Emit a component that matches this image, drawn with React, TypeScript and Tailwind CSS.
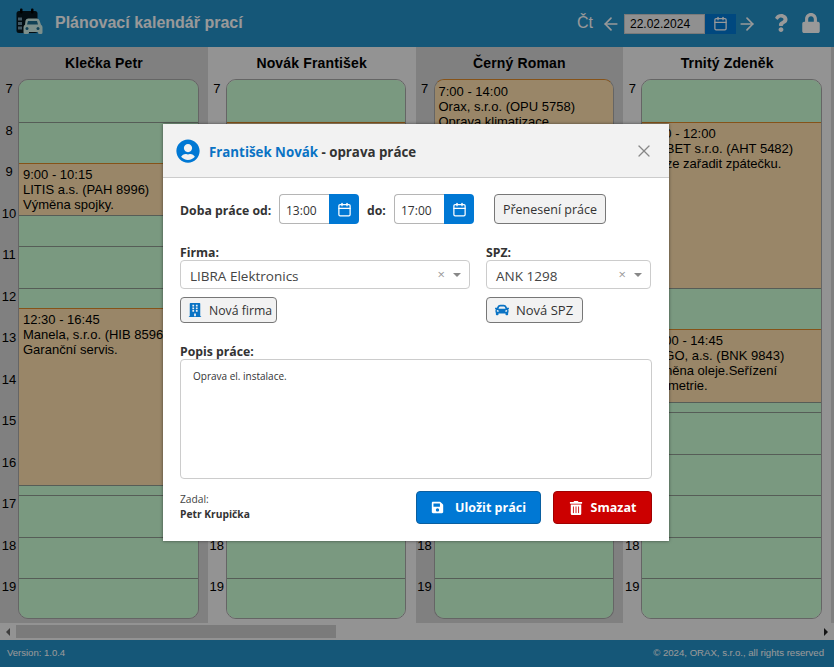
import { ArrowLeft, ArrowRight, Calendar, X } from 'lucide-react'
import { FaBuilding, FaCar, FaLock, FaQuestion, FaSave, FaTrashAlt, FaUserCircle } from 'react-icons/fa'

const HOUR = 41.5

type Job = { from: number; to: number; lines: string[] }
type Worker = { name: string; jobs: Job[] }

const workers: Worker[] = [
  {
    name: 'Klečka Petr',
    jobs: [
      { from: 9, to: 10.25, lines: ['9:00 - 10:15', 'LITIS a.s. (PAH 8996)', 'Výměna spojky.'] },
      { from: 12.5, to: 16.75, lines: ['12:30 - 16:45', 'Manela, s.r.o. (HIB 8596)', 'Garanční servis.'] },
    ],
  },
  {
    name: 'Novák František',
    jobs: [{ from: 8, to: 17, lines: ['13:00 - 17:00', 'LIBRA Elektronics', 'Oprava el. instalace.'] }],
  },
  {
    name: 'Černý Roman',
    jobs: [{ from: 7, to: 14, lines: ['7:00 - 14:00', 'Orax, s.r.o. (OPU 5758)', 'Oprava klimatizace'] }],
  },
  {
    name: 'Trnitý Zdeněk',
    jobs: [
      { from: 8, to: 12, lines: ['8:00 - 12:00', 'ROBET s.r.o. (AHT 5482)', 'Nelze zařadit zpátečku.'] },
      { from: 13, to: 14.75, lines: ['13:00 - 14:45', 'ARGO, a.s. (BNK 9843)', 'Výměna oleje.Seřízení', 'geometrie.'] },
    ],
  },
]

const hours = [7, 8, 9, 10, 11, 12, 13, 14, 15, 16, 17, 18, 19]

function Day ({ jobs }: { jobs: Job[] }): JSX.Element {
  const cells: JSX.Element[] = []
  let t = 7
  while (t < 20) {
    const job = jobs.find((j) => j.from === t)
    if (job != null) {
      cells.push(
        <div key={t} className="border-t border-[#e08a2a] bg-[#ffe0ad] px-[4px] pt-[3px] first:pt-[4px] text-[13px] leading-[15px] text-black first:border-t-0 overflow-hidden" style={{ height: (job.to - job.from) * HOUR }}>
          {job.lines.map((line) => <div key={line} className="whitespace-nowrap">{line}</div>)}
        </div>
      )
      t = job.to
    } else {
      const next = Math.min(Math.floor(t) + 1, ...jobs.filter((j) => j.from > t).map((j) => j.from))
      cells.push(
        <div key={t} className="border-t border-[#8f9c92] bg-[#ccffd5] first:border-t-0" style={{ height: (next - t) * HOUR }} />
      )
      t = next
    }
  }
  const startsBusy = jobs.some((j) => j.from === 7)
  return (
    <div className={startsBusy ? 'w-[180.5px] h-[540px] overflow-hidden rounded-[10px] border border-[#a8a8a8] border-t-[#e08a2a]' : 'w-[180.5px] h-[540px] overflow-hidden rounded-[10px] border border-[#a8a8a8]'}>
      {cells}
    </div>
  )
}

function Column ({ worker, index }: { worker: Worker; index: number }): JSX.Element {
  return (
    <div className={index % 2 === 0 ? 'w-[207.75px] shrink-0 bg-[#d6d6d6]' : 'w-[207.75px] shrink-0 bg-[#f5f5f5]'}>
      <div className="h-[32px] flex items-center justify-center font-bold text-[14px] tracking-[0.15px] text-black">{worker.name}</div>
      <div className="flex">
        <div className="w-[18px] pt-[1px]">
          {hours.map((h) => (
            <div key={h} className="h-[41.5px] pt-[1px] text-center text-[13px] leading-[16px] text-black">{h}</div>
          ))}
        </div>
        <Day jobs={worker.jobs} />
      </div>
    </div>
  )
}

function TimeInput ({ value }: { value: string }): JSX.Element {
  return (
    <div className="flex h-[30px]">
      <div className="w-[50px] flex items-center pl-[6px] pt-[4px] bg-white border border-[#b5b5b5] border-r-0 rounded-l-[4px] text-[12px] text-[#333]">{value}</div>
      <div className="w-[30px] flex items-center justify-center bg-[#0078d4] rounded-r-[4px]">
        <Calendar size={15} className="text-white" />
      </div>
    </div>
  )
}

function ComboBox ({ value, width }: { value: string; width: string }): JSX.Element {
  return (
    <div className={`${width} h-[29px] flex items-center bg-white border border-[#ccc] rounded-[4px] pl-[9px] pr-[8px] text-[13.5px] text-[#444]`}>
      <span className="flex-1 pt-[4px]">{value}</span>
      <span className="text-[13px] leading-none text-[#999] mr-[8px]">×</span>
      <span className="w-0 h-0 border-x-[4px] border-x-transparent border-t-[4px] border-t-[#888]" />
    </div>
  )
}

export default function App (): JSX.Element {
  return (
    <div className="relative w-[834px] h-[667px] overflow-hidden flex flex-col font-['Liberation_Sans',sans-serif]">
      <header className="h-[47px] shrink-0 bg-[#2391c9] flex items-center text-white">
        <svg width="28" height="28" viewBox="0 0 28 28" className="ml-[16px] mb-[3px]">
          <rect x="0.5" y="3" width="21" height="22" rx="2.5" fill="#000" fillOpacity="0.85" />
          <rect x="4" y="0.5" width="2.5" height="5" rx="1" fill="#000" />
          <rect x="15" y="0.5" width="2.5" height="5" rx="1" fill="#000" />
          <path d="M2 9.5h4v3H2zM2 14h4v3H2zM2 18.5h4v3H2z" fill="#6b8fa3" />
          <path d="M9.5 12.5a3 3 0 0 1 2.8-2h8.4a3 3 0 0 1 2.8 2l1.5 4.2a3 3 0 0 1 1.5 2.6v5.2a1.5 1.5 0 0 1-1.5 1.5h-1.5a1.5 1.5 0 0 1-1.5-1.5V24h-9v.5a1.5 1.5 0 0 1-1.5 1.5H9a1.5 1.5 0 0 1-1.5-1.5v-5.2A3 3 0 0 1 9 16.7z" fill="#cfeee8" />
          <path d="M12 13h9l1 3.5H11z" fill="#1d6d8f" />
          <circle cx="11" cy="20.5" r="1.5" fill="#1d6d8f" />
          <circle cx="22" cy="20.5" r="1.5" fill="#1d6d8f" />
        </svg>
        <h1 className="ml-[11px] pb-[2px] font-bold text-[16px]">Plánovací kalendář prací</h1>
        <div className="ml-auto flex items-center">
          <span className="text-[16px] mr-[8px] pb-[1px]">Čt</span>
          <ArrowLeft size={20} strokeWidth={2} className="mr-[3px]" />
          <div className="w-[81px] h-[20px] flex items-center pl-[5px] bg-[#f0f0f0] border border-[#ccc] text-[12px] text-black">22.02.2024</div>
          <div className="w-[31px] h-[20px] flex items-center justify-center bg-[#0078d4]">
            <Calendar size={15} />
          </div>
          <ArrowRight size={20} strokeWidth={2} className="ml-[1px]" />
          <FaQuestion size={18} className="ml-[15px] mb-[2px]" />
          <FaLock size={20} className="ml-[11px] mr-[13px] mb-[2px]" />
        </div>
      </header>

      <main className="flex-1 flex overflow-hidden">
        {workers.map((w, i) => <Column key={w.name} worker={w} index={i} />)}
        <div className="flex-1 bg-[#d6d6d6]" />
      </main>

      <div className="h-[17px] shrink-0 flex items-center bg-[#f5f5f5]">
        <span className="w-[16px] flex justify-center">
          <span className="w-0 h-0 border-y-[4px] border-y-transparent border-r-[4px] border-r-[#666]" />
        </span>
        <div className="w-[320px] h-[13px] bg-[#cdcdcd]" />
        <span className="ml-auto w-[16px] flex justify-center">
          <span className="w-0 h-0 border-y-[4px] border-y-transparent border-l-[4px] border-l-[#222]" />
        </span>
      </div>

      <footer className="h-[27px] shrink-0 bg-[#2391c9] flex items-center justify-between pl-[7px] pr-[10px] text-[9.5px] text-white">
        <span>Version: 1.0.4</span>
        <span className="text-[9.6px]">© 2024, ORAX, s.r.o., all rights reserved</span>
      </footer>

      <div className="absolute inset-0 bg-black/40 flex items-center justify-center font-['Open_Sans',sans-serif]">
        <div className="w-[506px] h-[417px] mr-[2px] mb-[2px] bg-white flex flex-col shadow-[0_0_3px_rgba(0,0,0,0.5)]">
          <div className="h-[54px] shrink-0 bg-[#f2f2f2] border-b border-[#ccc] flex items-center pl-[13px] pr-[15px]">
            <FaUserCircle size={24} className="text-[#0078d4]" />
            <div className="ml-[9px] pt-[4px] flex-1 font-bold text-[13.3px] text-[#333]">
              <span className="text-[#0a73c4]">František Novák</span> - oprava práce
            </div>
            <X size={20} strokeWidth={1.5} className="text-[#888]" />
          </div>

          <div className="flex-1 px-[17px] pt-[16px]">
            <div className="flex items-center h-[30px]">
              <span className="w-[99px] pt-[4px] font-bold text-[12.25px] text-[#333]">Doba práce od:</span>
              <TimeInput value="13:00" />
              <span className="ml-[8px] w-[27px] pt-[4px] font-bold text-[12.25px] text-[#333]">do:</span>
              <TimeInput value="17:00" />
              <button className="ml-[20px] w-[112px] h-[30px] pt-[2px] bg-[#f2f2f2] border border-[#777] rounded-[4px] text-[12.5px] text-[#333]">Přenesení práce</button>
            </div>

            <div className="flex mt-[20px]">
              <div className="w-[306px]">
                <div className="h-[16px] pt-[1px] font-bold text-[12.25px] leading-[16px] text-[#333]">Firma:</div>
                <ComboBox value="LIBRA Elektronics" width="w-[290px]" />
                <button className="mt-[8px] w-[97px] h-[26px] flex items-center gap-[7px] pl-[7px] bg-[#f2f2f2] border border-[#777] rounded-[4px] text-[12.25px] text-[#333]">
                  <FaBuilding size={14} className="text-[#0a73c4]" />
                  <span className="pt-[2px]">Nová firma</span>
                </button>
              </div>
              <div className="w-[165px]">
                <div className="h-[16px] pt-[1px] font-bold text-[12.25px] leading-[16px] text-[#333]">SPZ:</div>
                <ComboBox value="ANK 1298" width="w-[165px]" />
                <button className="mt-[8px] w-[97px] h-[26px] flex items-center gap-[7px] pl-[8px] bg-[#f2f2f2] border border-[#777] rounded-[4px] text-[13px] text-[#333]">
                  <FaCar size={14} className="text-[#0a73c4]" />
                  <span className="pt-[2px]">Nová SPZ</span>
                </button>
              </div>
            </div>

            <div className="mt-[20px] h-[16px] pt-[1px] font-bold text-[12.25px] leading-[16px] text-[#333]">Popis práce:</div>
            <div className="w-[472px] h-[120px] bg-white border border-[#ccc] rounded-[4px] pl-[12px] pt-[9px] text-[10px] text-[#333]">Oprava el. instalace.</div>

            <div className="flex items-start mt-[12px]">
              <div className="flex-1 pt-[1px] text-[10.25px] leading-[15px] text-[#444]">
                <div>Zadal:</div>
                <div className="font-bold text-[#333]">Petr Krupička</div>
              </div>
              <button className="w-[125px] h-[33px] flex items-center justify-center gap-[11px] bg-[#0078d4] border border-[#0a5fa0] rounded-[4px] font-bold text-[12.5px] text-white">
                <FaSave size={13} />
                <span className="pt-[2px]">Uložit práci</span>
              </button>
              <button className="ml-[12px] w-[99px] h-[33px] flex items-center justify-center gap-[8px] bg-[#cc0000] border border-[#a00000] rounded-[4px] font-bold text-[12.5px] text-white">
                <FaTrashAlt size={14} />
                <span className="pt-[2px]">Smazat</span>
              </button>
            </div>
          </div>
        </div>
      </div>
    </div>
  )
}
